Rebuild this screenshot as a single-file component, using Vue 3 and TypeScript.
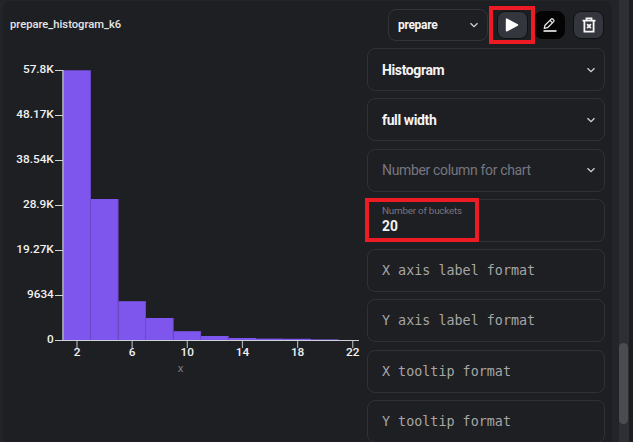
<script setup lang="ts">
interface Field {
  label: string
  kind: 'select' | 'placeholder' | 'number' | 'code'
  value?: string
}

const fields: Field[] = [
  { label: 'Histogram', kind: 'select' },
  { label: 'full width', kind: 'select' },
  { label: 'Number column for chart', kind: 'placeholder' },
  { label: 'Number of buckets', kind: 'number', value: '20' },
  { label: 'X axis label format', kind: 'code' },
  { label: 'Y axis label format', kind: 'code' },
  { label: 'X tooltip format', kind: 'code' },
  { label: 'Y tooltip format', kind: 'code' },
]

const baseline = 340
const barStart = 63.2
const barWidth = 27.55
const heights = [269.7, 141, 38.8, 22, 8.8, 4, 2, 1.4, 1.2, 0.6]
const bars = heights.map((h, i) => ({ x: barStart + i * barWidth, y: baseline - h, h }))

const yTicks = ['57.8K', '48.17K', '38.54K', '28.9K', '19.27K', '9634', '0'].map((label, i) => ({
  label,
  y: 70.5 + i * 45,
}))
const xTicks = [2, 6, 10, 14, 18, 22].map((label, i) => ({ label, x: 77 + i * 55.15 }))
</script>

<template>
  <div class="page">
    <main class="card">
      <header class="toolbar">
        <span class="title">prepare_histogram_k6</span>
        <div class="stage">
          <span>prepare</span>
          <svg class="chevron" viewBox="0 0 10 10"><path d="M1.5 3.2 5 6.7 8.5 3.2" /></svg>
        </div>
        <div class="highlight run">
          <button class="btn" aria-label="Run">
            <svg width="14" height="16" viewBox="0 0 14 16"><path d="M1.6 2.2v11.6L12.4 8z" fill="#fff" stroke="#fff" stroke-width="1.6" stroke-linejoin="round" /></svg>
          </button>
        </div>
        <button class="btn edit" aria-label="Edit">
          <svg width="16" height="16" viewBox="0 0 16 16" fill="none" stroke="#e8e8e8" stroke-width="1.3" stroke-linejoin="round">
            <path d="M2.3 11.4 3 8.2 9.2 2.1Q10 1.4 10.8 2.1L11.7 3Q12.4 3.8 11.7 4.6L5.5 10.7zM8 3.4 10.4 5.8" />
            <path d="M1.5 14h13" stroke-width="1.7" />
          </svg>
        </button>
        <button class="btn remove" aria-label="Delete">
          <svg width="14" height="16" viewBox="0 0 14 16" fill="none" stroke="#f6f6f6" stroke-width="1.8">
            <path d="M.5 3.7h13M4.5 3.4V1.3h5v2.1M2.4 3.7v10.9h9.2V3.7" />
            <path d="m5.1 7.2 3.8 4M8.9 7.2l-3.8 4" />
          </svg>
        </button>
      </header>

      <section class="content">
        <svg class="chart" width="364" height="394" viewBox="3 48 364 394">
          <g class="bars">
            <rect v-for="(b, i) in bars" :key="i" :x="b.x" :y="b.y" :width="barWidth" :height="b.h" />
            <path v-for="(b, i) in bars.slice(0, 6)" :key="`edge-${i}`" :d="`M${b.x + barWidth - 0.3} ${b.y}V340`" />
          </g>
          <path class="axis-y" d="M63 70V341" />
          <path class="axis-x" d="M55 340.5H359" />
          <g v-for="t in yTicks" :key="t.label">
            <path class="tick" :d="`M55 ${t.y}H63`" />
            <text class="label" x="53.8" :y="t.y + 2.9" text-anchor="end">{{ t.label }}</text>
          </g>
          <g v-for="t in xTicks" :key="t.label">
            <path class="tick x" :d="`M${t.x} 341V348`" />
            <text class="label" :x="t.x" y="356" text-anchor="middle">{{ t.label }}</text>
          </g>
          <text class="axis-title" x="180.7" y="372" text-anchor="middle">x</text>
        </svg>

        <div class="fields">
          <div v-for="f in fields" :key="f.label" class="field" :class="f.kind">
            <div v-if="f.kind === 'number'" class="highlight number-box">
              <small>{{ f.label }}</small>
              <strong>{{ f.value }}</strong>
            </div>
            <template v-else>
              <span>{{ f.label }}</span>
              <svg v-if="f.kind !== 'code'" class="chevron" viewBox="0 0 10 10"><path d="M1.5 3.2 5 6.7 8.5 3.2" /></svg>
            </template>
          </div>
        </div>
      </section>
    </main>
    <aside class="scroll"><div class="thumb"></div></aside>
  </div>
</template>

<style>
body {
  background: #222328;
  overflow: hidden;
}
</style>

<style scoped>
.page {
  display: flex;
  width: 633px;
  height: 442px;
  overflow: hidden;
  box-sizing: border-box;
  padding-left: 3px;
  background: #232429;
  color: #f4f4f5;
  font-family: Roboto, sans-serif;
}
.card {
  width: 609px;
  flex: none;
  margin-top: 1px;
  margin-right: 7px;
  border-radius: 8px 8px 0 0;
  background: #1e1f23;
}
.toolbar {
  display: flex;
  align-items: center;
  height: 47px;
  box-sizing: border-box;
  padding: 0 8px 0 7px;
}
.title {
  flex: 1;
  font-size: 11.2px;
  font-weight: 500;
  color: #e6e6e7;
}
.stage {
  display: flex;
  align-items: center;
  justify-content: space-between;
  width: 100px;
  height: 32px;
  box-sizing: border-box;
  padding: 0 8px 0 9px;
  border: 1px solid #33343a;
  border-radius: 8px;
  font-size: 12px;
  font-weight: 700;
  letter-spacing: -0.3px;
}
.chevron {
  width: 10px;
  height: 10px;
  fill: none;
  stroke: #d2d2d4;
  stroke-width: 1.3;
}
.highlight {
  box-sizing: border-box;
  border: 4px solid #ed1c24;
}
.run {
  display: flex;
  align-items: center;
  justify-content: center;
  width: 46px;
  height: 38px;
  margin-left: 1px;
  margin-right: -1px;
  z-index: 1;
}
.btn {
  display: flex;
  align-items: center;
  justify-content: center;
  flex: none;
  width: 31px;
  height: 28px;
  padding: 0;
  border: 1px solid #101114;
  border-radius: 8px;
  background: #34363d;
}
.edit {
  background: #040404;
  border-color: #040404;
}
.remove {
  margin-left: 8px;
}
.content {
  display: flex;
}
.chart {
  flex: none;
}
.bars rect {
  fill: #7f56ed;
}
.bars path {
  stroke: #6947c4;
  stroke-width: 0.8;
}
.axis-y,
.axis-x,
.tick {
  fill: none;
  stroke: #cdd2d5;
}
.axis-y {
  stroke: #a8acb5;
  stroke-width: 1.7;
}
.axis-x {
  stroke-width: 1.1;
}
.tick.x {
  stroke: #a7adb0;
  stroke-width: 1.2;
}
.label {
  fill: #f1f1f1;
  font-size: 11.8px;
  font-weight: 500;
}
.axis-title {
  fill: #7b7b85;
  font-size: 11.5px;
}
.fields {
  display: flex;
  flex-direction: column;
  gap: 7.3px;
  width: 238px;
}
.field {
  display: flex;
  align-items: center;
  justify-content: space-between;
  flex: none;
  height: 43px;
  box-sizing: border-box;
  padding: 0 8px 0 14px;
  border: 1px solid #303136;
  border-radius: 8px;
  font-size: 14px;
}
.select {
  font-weight: 700;
  letter-spacing: -0.38px;
}
.placeholder {
  color: #767681;
  letter-spacing: -0.35px;
}
.code {
  font-family: "DejaVu Sans Mono", monospace;
  font-size: 13.4px;
  color: #a6a6a6;
}
.number {
  padding: 0;
}
.number-box {
  display: flex;
  flex-direction: column;
  flex: none;
  width: 114px;
  height: 44px;
  margin-left: -3px;
  padding: 2px 0 0 13px;
}
.number-box small {
  font-size: 9.8px;
  letter-spacing: -0.2px;
  line-height: 13px;
  color: #767681;
  white-space: nowrap;
}
.number-box strong {
  font-size: 13.8px;
  line-height: 18px;
}
.scroll {
  width: 10px;
  height: 442px;
  flex: none;
  background: #2e2f34;
  border-right: 4px solid #1c1d21;
}
.thumb {
  width: 9px;
  height: 81px;
  margin-top: 343px;
  border-radius: 5px;
  background: #4b4c50;
}
</style>
